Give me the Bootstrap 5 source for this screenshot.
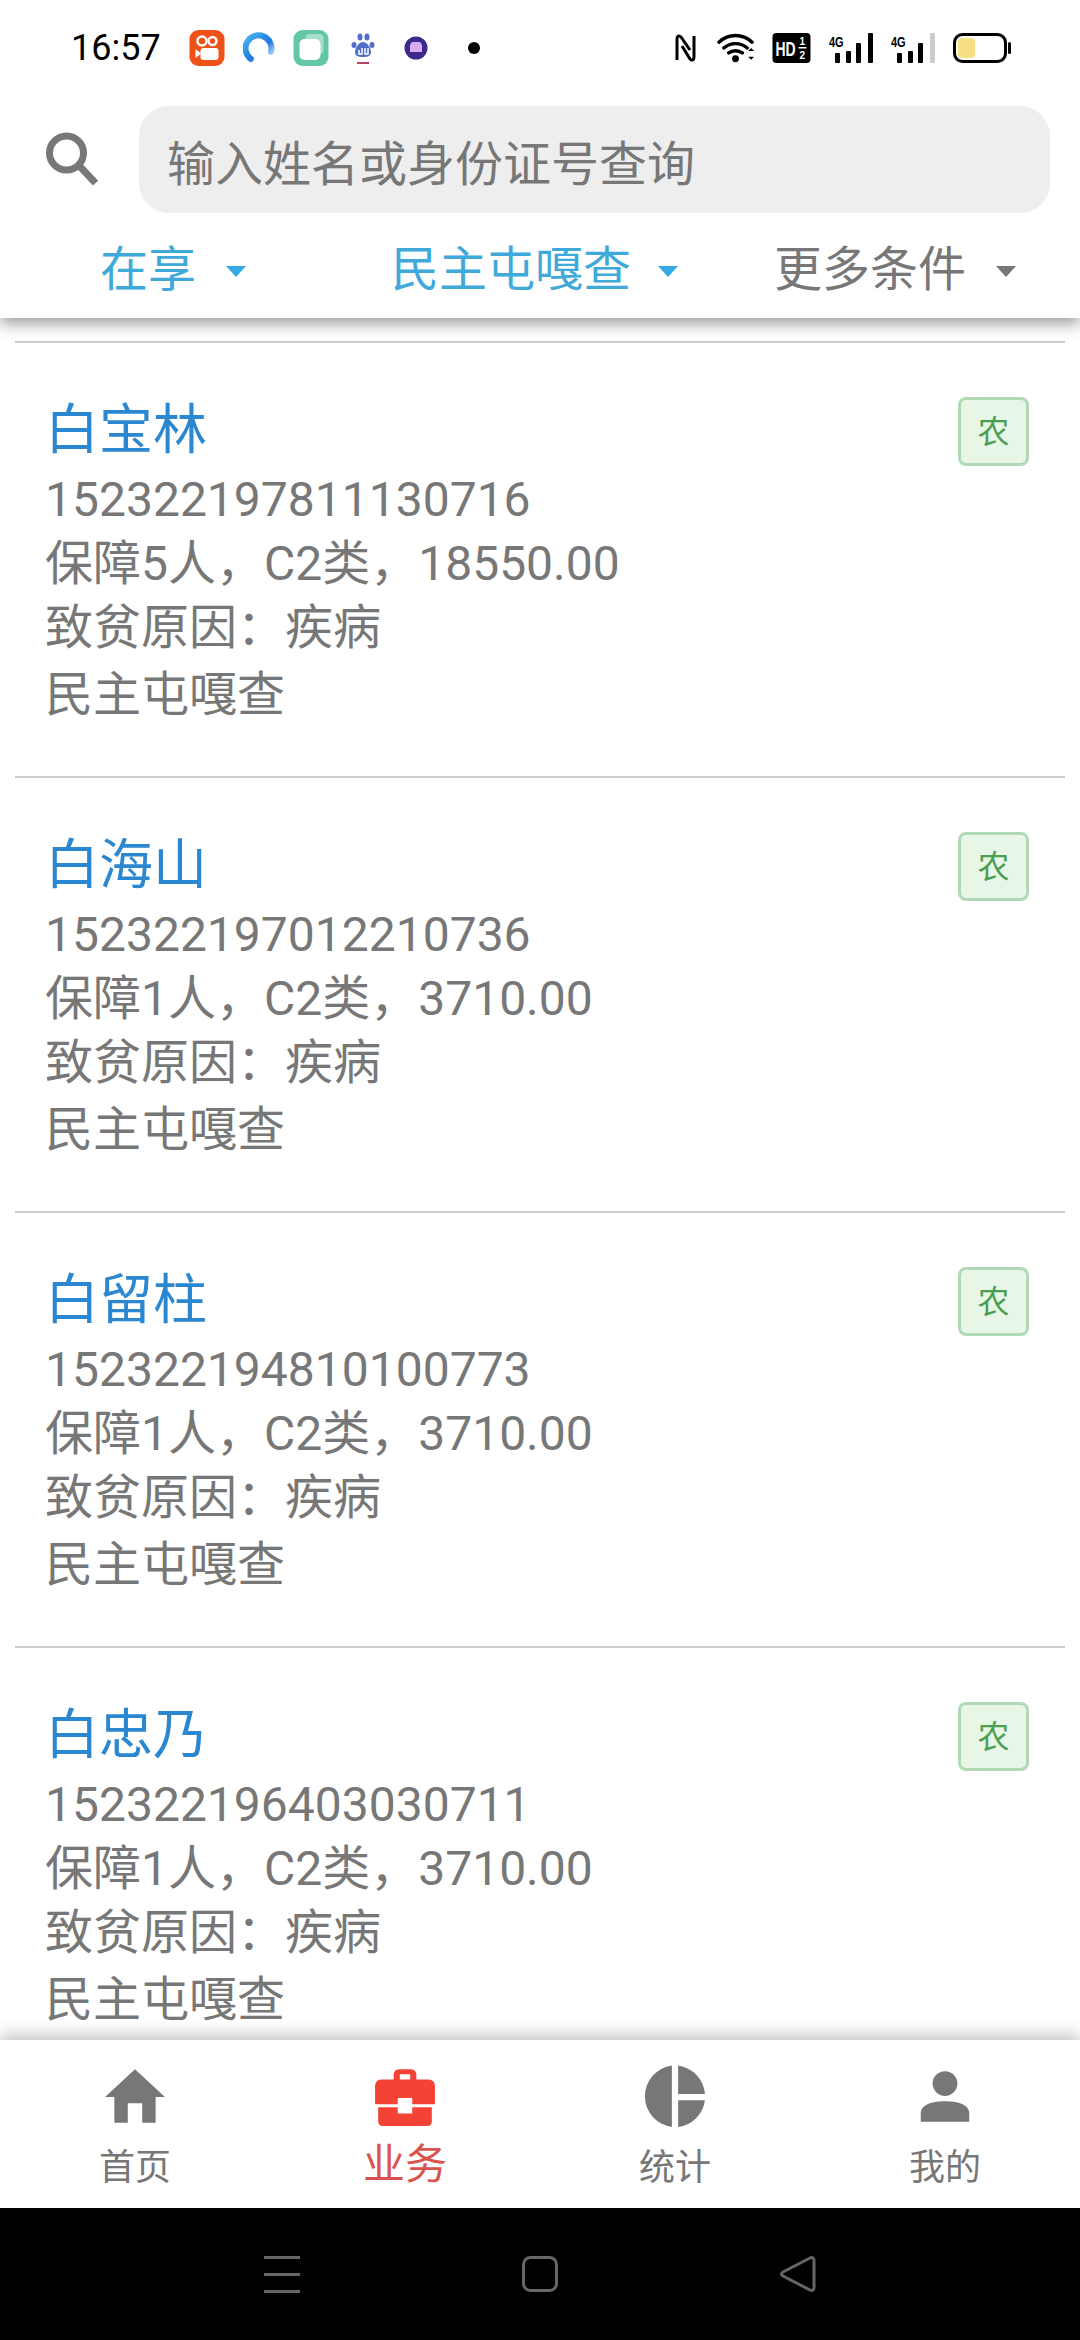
<!DOCTYPE html>
<html lang="zh">
<head>
<meta charset="utf-8">
<title>列表</title>
<link href="https://cdn.jsdelivr.net/npm/bootstrap@5.3.0/dist/css/bootstrap.min.css" rel="stylesheet">
<style>
html,body{height:100%;margin:0}
body{font-family:Roboto,"Noto Sans CJK SC",sans-serif;color:#777;background:#fff;width:1080px;height:2340px;overflow:hidden}
.app-shell{height:2340px}
.app-head{height:318px;background:#fff;box-shadow:0 6px 14px rgba(0,0,0,.38);z-index:2;position:relative;flex:none}
.app-status{height:105px;padding:0 0 9px 71px;color:#000}
.app-time{font-size:36px;width:118px;line-height:1}
.app-n1{margin-right:18px}.app-n2{margin-right:18px}.app-n3{margin-right:22px}.app-n4{margin-right:29px}.app-n5{margin-right:40px}
.app-sys{margin-left:auto;padding-right:69px}
.app-s1{margin-right:20px}.app-s2{margin-right:16px}.app-s3{margin-right:18px}
.app-search{height:108px;padding-right:30px}
.app-search-ico{width:139px;padding-left:45px;flex:none}
.app-input.form-control{height:107px;border:0;border-radius:30px;background:#eee;font-size:48px;padding:10px 21px 0 28px;color:#777;box-shadow:none}
.app-input::placeholder{color:#777;opacity:1}
.app-filters{height:105px;font-size:48px;padding-top:9px}
.app-f1{width:391px;padding-left:100px}
.app-f2{width:383px}
.app-on{color:#3fa9d9}
.app-caret{width:0;height:0;border-left:10px solid transparent;border-right:10px solid transparent;border-top:11px solid currentColor;margin-left:30px;margin-top:2px}
.app-f1 .app-caret,.app-f2 .app-caret{color:#35a9e2}
.app-f2 .app-caret{margin-left:27px}
.app-list{flex:1 1 auto;overflow:hidden;padding:23px 15px 0;min-height:0}
.app-list .list-group{border-radius:0}
.list-group .list-group-item.app-row{border:0;border-top:2px solid #ccc;border-radius:0;padding:51px 36px 49px 30px;background:transparent;color:#777}
.app-name{font-size:54px;line-height:74px;color:#2b87cf}
.app-line{font-size:48px;line-height:64px}
.app-last{margin-top:3px}
.app-tag{width:71px;height:69px;margin-top:3px;border:3px solid #b2d9b6;border-radius:8px;background:#e7f6e6;color:#4b9e52;font-size:32px;line-height:1;flex:none}
.app-foot{height:168px;background:#fff;box-shadow:0 -6px 14px rgba(0,0,0,.22);position:relative;z-index:2;flex:none}
.app-tab{width:270px;color:#777;font-size:36px;line-height:44px;padding-top:24px}
.app-tab svg{display:block;margin-bottom:18px}
.app-tab-on{color:#d9534f;font-size:42px}
.app-tab-on svg{margin-bottom:15px}
.app-sysbar{height:132px;background:#000;flex:none}
.app-sysbar svg{display:block}
</style>
</head>
<body>
<div class="app-shell d-flex flex-column">
  <header class="app-head">
    <div class="app-status d-flex align-items-center">
      <div class="app-time">16:57</div>
      <div class="d-flex align-items-center">
        <svg class="app-n1" width="36" height="36" viewBox="0 0 35 36"><rect width="35" height="36" rx="9" fill="#ef5217"/><circle cx="12.500" cy="11" r="4.500" fill="none" stroke="#fff" stroke-width="2.500"/><circle cx="23" cy="11" r="4" fill="none" stroke="#fff" stroke-width="2.500"/><rect x="11" y="18" width="18" height="12" rx="3" fill="#fff"/><path d="M6 19l6 4.500-6 4.500z" fill="#fff"/></svg>
        <svg class="app-n2" width="32" height="32" viewBox="0 0 32 32"><defs><linearGradient id="arcg" x1="0" y1="0" x2="1" y2="1"><stop offset="0" stop-color="#48b7f4"/><stop offset=".6" stop-color="#1c78dd"/><stop offset="1" stop-color="#d8ecfb"/></linearGradient></defs><path d="M8 27A13 13 0 1 1 28 20" fill="none" stroke="url(#arcg)" stroke-width="6" stroke-linecap="round"/></svg>
        <svg class="app-n3" width="36" height="36" viewBox="0 0 35 36"><rect width="35" height="36" rx="9" fill="#62c7a5"/><rect x="12" y="4" width="18" height="20" rx="4" fill="#a5e0cc"/><rect x="6" y="9" width="21" height="21" rx="5" fill="#fff"/></svg>
        <svg class="app-n4" width="24" height="33" viewBox="0 0 24 33"><g fill="#4f6fc8"><ellipse cx="3" cy="13" rx="2.500" ry="3"/><ellipse cx="9" cy="5" rx="2.500" ry="3.500"/><ellipse cx="16" cy="5" rx="2.500" ry="3.500"/><ellipse cx="21" cy="13" rx="2.500" ry="3"/><path d="M12 10c4 0 8 6 8 10s-3 5-8 5-8-1-8-5 4-10 8-10z"/></g><path d="M8 18v4h3v-6M14 16v6h3v-6" fill="none" stroke="#fff" stroke-width="1.500"/><rect x="6" y="30" width="12" height="2" fill="#b04560"/></svg>
        <svg class="app-n5" width="24" height="24" viewBox="0 0 24 24"><circle cx="12" cy="12" r="11.500" fill="#3b2a8c"/><path d="M6 9l2-3h8l2 3v7H6z" fill="#dcaaf0"/></svg>
        <svg width="12" height="12" viewBox="0 0 12 12"><circle cx="6" cy="6" r="6" fill="#000"/></svg>
      </div>
      <div class="app-sys d-flex align-items-center">
        <svg class="app-s1" width="23" height="30" viewBox="0 0 23 30"><path d="M3 27V6c0-3 2-4 4-2l9 13M8 13l8 13c2 2 4 1 4-2V3" fill="none" stroke="#000" stroke-width="3" stroke-linejoin="round"/></svg>
        <svg class="app-s2" width="39" height="30" viewBox="0 0 40 30"><path d="M2 9c10-9 24-9 34 0M7 15c7-6 17-6 24 0M12 20c4-3 10-3 14 0" fill="none" stroke="#000" stroke-width="3.500" stroke-linecap="round"/><circle cx="19" cy="26" r="3.500" fill="#000"/><path d="M32 18l3-3 3 3zM32 24l3 3 3-3z" fill="#000"/></svg>
        <svg class="app-s3" width="39" height="30" viewBox="0 0 38 30"><rect width="38" height="30" rx="4" fill="#000"/><text transform="translate(3 23) scale(1 1.5)" font-family="Liberation Sans,sans-serif" font-weight="700" font-size="14" fill="#fff">HD</text><text x="27" y="12" font-family="Liberation Sans,sans-serif" font-weight="700" font-size="10" fill="#fff">1</text><text x="27" y="26" font-family="Liberation Sans,sans-serif" font-weight="700" font-size="10" fill="#fff">2</text><rect x="26" y="14" width="8" height="1.500" fill="#fff"/></svg>
        <svg class="app-s3" width="44" height="30" viewBox="0 0 44 30"><text transform="translate(0 14) scale(1 1.4)" font-family="Liberation Sans,sans-serif" font-weight="700" font-size="11" fill="#000">4G</text><g fill="#000"><rect x="6" y="20" width="5" height="10" rx="1"/><rect x="17" y="18" width="5" height="12" rx="1"/><rect x="27" y="10" width="5" height="20" rx="1"/><rect x="39" y="0" width="5" height="30" rx="1"/></g></svg>
        <svg class="app-s3" width="44" height="30" viewBox="0 0 44 30"><text transform="translate(0 14) scale(1 1.4)" font-family="Liberation Sans,sans-serif" font-weight="700" font-size="11" fill="#000">4G</text><g fill="#000"><rect x="6" y="20" width="5" height="10" rx="1"/><rect x="17" y="18" width="5" height="12" rx="1"/><rect x="27" y="10" width="5" height="20" rx="1"/></g><rect x="39" y="0" width="5" height="30" rx="1" fill="#ccc"/></svg>
        <svg width="58" height="30" viewBox="0 0 58 30"><rect x="1.500" y="1.500" width="51" height="27" rx="8" fill="#fff" stroke="#000" stroke-width="3"/><rect x="5" y="5" width="17" height="20" rx="4" fill="#f9de83"/><rect x="55" y="9" width="3" height="12" rx="1.500" fill="#000"/></svg>
      </div>
    </div>
    <div class="app-search d-flex align-items-center">
      <div class="app-search-ico">
        <svg class="d-block" width="53" height="54" viewBox="0 0 52 54"><circle cx="21" cy="21" r="17" fill="none" stroke="#777" stroke-width="7"/><path d="M33 33l17 18" stroke="#777" stroke-width="7" fill="none"/></svg>
      </div>
      <input class="form-control app-input" type="text" placeholder="输入姓名或身份证号查询">
    </div>
    <div class="app-filters d-flex align-items-center">
      <div class="app-f1 d-flex align-items-center app-on"><span>在享</span><i class="app-caret"></i></div>
      <div class="app-f2 d-flex align-items-center app-on"><span>民主屯嘎查</span><i class="app-caret"></i></div>
      <div class="d-flex align-items-center"><span>更多条件</span><i class="app-caret"></i></div>
    </div>
  </header>

  <main class="app-list">
    <div class="list-group">
      <div class="list-group-item app-row d-flex justify-content-between">
        <div>
          <div class="app-name">白宝林</div>
          <div class="app-line">152322197811130716</div>
          <div class="app-line">保障5人，C2类，18550.00</div>
          <div class="app-line">致贫原因：疾病</div>
          <div class="app-line app-last">民主屯嘎查</div>
        </div>
        <span class="app-tag d-flex align-items-center justify-content-center">农</span>
      </div>
      <div class="list-group-item app-row d-flex justify-content-between">
        <div>
          <div class="app-name">白海山</div>
          <div class="app-line">152322197012210736</div>
          <div class="app-line">保障1人，C2类，3710.00</div>
          <div class="app-line">致贫原因：疾病</div>
          <div class="app-line app-last">民主屯嘎查</div>
        </div>
        <span class="app-tag d-flex align-items-center justify-content-center">农</span>
      </div>
      <div class="list-group-item app-row d-flex justify-content-between">
        <div>
          <div class="app-name">白留柱</div>
          <div class="app-line">152322194810100773</div>
          <div class="app-line">保障1人，C2类，3710.00</div>
          <div class="app-line">致贫原因：疾病</div>
          <div class="app-line app-last">民主屯嘎查</div>
        </div>
        <span class="app-tag d-flex align-items-center justify-content-center">农</span>
      </div>
      <div class="list-group-item app-row d-flex justify-content-between">
        <div>
          <div class="app-name">白忠乃</div>
          <div class="app-line">152322196403030711</div>
          <div class="app-line">保障1人，C2类，3710.00</div>
          <div class="app-line">致贫原因：疾病</div>
          <div class="app-line app-last">民主屯嘎查</div>
        </div>
        <span class="app-tag d-flex align-items-center justify-content-center">农</span>
      </div>
    </div>
  </main>

  <nav class="app-foot d-flex">
    <div class="app-tab d-flex flex-column align-items-center">
      <svg width="64" height="64" viewBox="0 0 62 62"><path d="M2 32L31 5l29 27H51v25H38V38H24v19H11V32z" fill="#777"/></svg>
      <span>首页</span>
    </div>
    <div class="app-tab app-tab-on d-flex flex-column align-items-center">
      <svg width="64" height="64" viewBox="0 0 62 62"><path d="M20 15v-5a5 5 0 0 1 5-5h12a5 5 0 0 1 5 5v5h12a6 6 0 0 1 6 6v18H38v-6H24v6H2V21a6 6 0 0 1 6-6zm6 0h10V10H26z" fill-rule="evenodd" fill="#f44336"/><path d="M5 42h19v6h14v-6h19v14a4 4 0 0 1-4 4H9a4 4 0 0 1-4-4z" fill="#f44336"/></svg>
      <span>业务</span>
    </div>
    <div class="app-tab d-flex flex-column align-items-center">
      <svg width="64" height="64" viewBox="0 0 62 62"><path d="M28 1.500A30 30 0 0 0 28 61z" fill="#777"/><path d="M34 1.500A30 30 0 0 1 60 29H34z" fill="#777"/><path d="M34 35h26A30 30 0 0 1 34 61z" fill="#777"/></svg>
      <span>统计</span>
    </div>
    <div class="app-tab d-flex flex-column align-items-center">
      <svg width="64" height="64" viewBox="0 0 62 62"><circle cx="31" cy="19" r="12" fill="#777"/><path d="M7.500 56v-8c0-9 11-12 23.500-12s23.500 3 23.500 12v8z" fill="#777"/></svg>
      <span>我的</span>
    </div>
  </nav>

  <div class="app-sysbar d-flex">
    <svg width="1080" height="132" viewBox="0 0 1080 132">
      <g fill="#666"><rect x="264" y="48" width="36" height="3"/><rect x="264" y="65" width="36" height="3"/><rect x="264" y="82" width="36" height="3"/></g>
      <rect x="523.500" y="49.500" width="33" height="33" rx="7" fill="none" stroke="#666" stroke-width="3"/>
      <path d="M814 52c0-2-2-3-4-2l-27 14c-2 1-2 3 0 4l27 14c2 1 4 0 4-2z" fill="none" stroke="#666" stroke-width="3" stroke-linejoin="round"/>
    </svg>
  </div>
</div>
<script src="https://cdn.jsdelivr.net/npm/bootstrap@5.3.0/dist/js/bootstrap.bundle.min.js"></script>
</body>
</html>
